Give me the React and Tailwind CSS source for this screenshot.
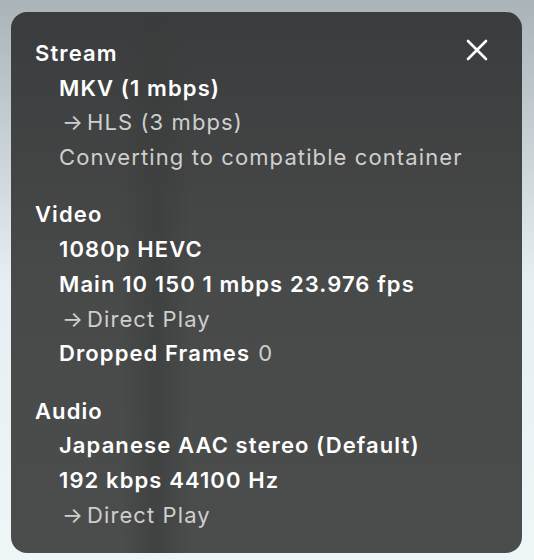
import React from "react";

function Line({ children, muted, arrow }) {
  return (
    <div
      className={
        "h-[34.75px] flex items-center pl-6 text-[22px] " +
        (muted ? "font-normal text-[#cfcfcf]" : "font-semibold text-white")
      }
    >
      {arrow ? <span className="ml-[3px] mr-[4px] tracking-normal">→</span> : null}
      {children}
    </div>
  );
}

function Section({ title, children }) {
  return (
    <div className="flex flex-col">
      <div className="h-[34.75px] flex items-center text-[22px] font-semibold text-white">{title}</div>
      {children}
    </div>
  );
}

export default function App() {
  return (
    <div
      className="w-[534px] h-[560px] overflow-hidden bg-gradient-to-b from-[#aab3b8] via-[#e6eef1] to-[#eef6f8] pt-3 pl-[11px]"
      style={{ fontFamily: "Inter, 'Noto Sans', sans-serif" }}
    >
      <div className="relative w-[511px] h-[541px] rounded-[16px] bg-gradient-to-b from-[#3b3c3d] via-[#484949] to-[#4b4c4c] px-6 pt-6 flex flex-col gap-[22.5px] tracking-[1.1px]">
        <div className="absolute left-[110px] top-0 bottom-0 w-[70px] bg-gradient-to-r from-transparent via-[#3a3b3b] to-transparent opacity-60" />
        <button className="absolute right-[34px] top-[27px] w-[22px] h-[22px]">
          <svg viewBox="0 0 22 22" width="22" height="22">
            <path d="M2 2 L20 20 M20 2 L2 20" stroke="white" strokeWidth="2.6" strokeLinecap="round" />
          </svg>
        </button>
        <div className="relative">
          <Section title="Stream">
            <Line>MKV (1 mbps)</Line>
            <Line muted arrow>HLS (3 mbps)</Line>
            <Line muted>Converting to compatible container</Line>
          </Section>
        </div>
        <div className="relative">
          <Section title="Video">
            <Line>1080p HEVC</Line>
            <Line>Main 10 150 1 mbps 23.976 fps</Line>
            <Line muted arrow>Direct Play</Line>
            <Line>
              Dropped Frames<span className="ml-2 font-normal text-[#cfcfcf]">0</span>
            </Line>
          </Section>
        </div>
        <div className="relative">
          <Section title="Audio">
            <Line>Japanese AAC stereo (Default)</Line>
            <Line>192 kbps 44100 Hz</Line>
            <Line muted arrow>Direct Play</Line>
          </Section>
        </div>
      </div>
    </div>
  );
}
